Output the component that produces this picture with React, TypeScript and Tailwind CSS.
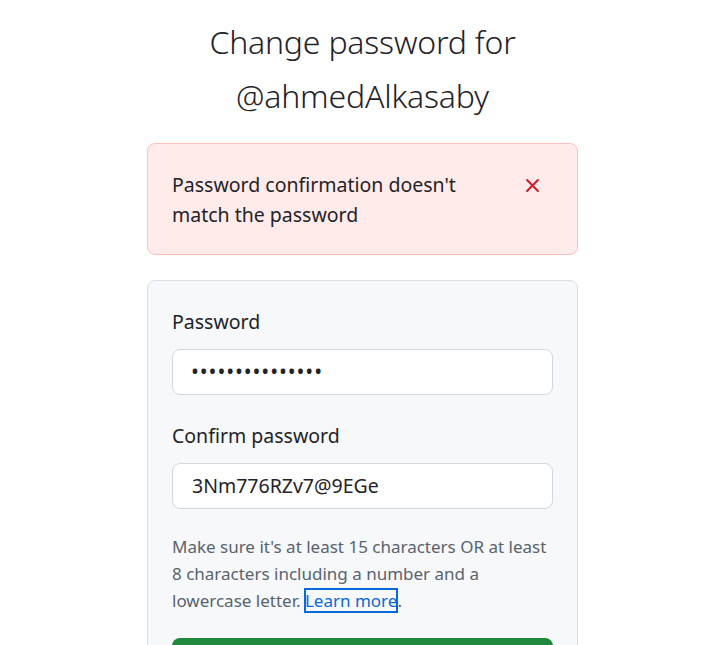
import React from "react";

export default function App() {
  return (
    <div className="min-h-[645px] bg-white pl-4 text-[#1f2328]" style={{ fontFamily: '"Noto Sans", "Open Sans", sans-serif' }}>
      <div className="mx-auto flex w-[431px] flex-col">
        <h1 className="mt-[15px] text-center text-[32px] font-light leading-[54px] tracking-[-0.2px]">
          Change password for
          <br />
          @ahmedAlkasaby
        </h1>
        <div className="mt-[20px] flex items-start justify-between rounded-[8px] border border-[#ffc1c0] bg-[#ffebe9] pb-[24px] pl-[24px] pr-[33px] pt-[26px]">
          <p className="w-[300px] text-[19.5px] leading-[30px]">Password confirmation doesn't match the password</p>
          <svg width="23" height="23" viewBox="0 0 16 16" className="mt-[4px] fill-[#cf222e]">
            <path d="M3.72 3.72a.75.75 0 0 1 1.06 0L8 6.94l3.22-3.22a.749.749 0 0 1 1.275.326.749.749 0 0 1-.215.734L9.06 8l3.22 3.22a.749.749 0 0 1-.326 1.275.749.749 0 0 1-.734-.215L8 9.06l-3.22 3.22a.751.751 0 0 1-1.042-.018.751.751 0 0 1-.018-1.042L6.94 8 3.72 4.78a.75.75 0 0 1 0-1.06Z" />
          </svg>
        </div>
        <div className="mt-[25px] h-[400px] rounded-t-[8px] border border-[#d8dee4] bg-[#f6f8fa] px-[24px] pt-[26px]">
          <label className="block text-[19.5px] leading-[30px]">Password</label>
          <div className="mt-[12px] flex h-[46px] items-center rounded-[8px] border border-[#d1d9e0] bg-white pl-[18px]">
            <span className="text-[21px] tracking-[0.9px]">•••••••••••••••</span>
          </div>
          <label className="mt-[26px] block text-[19.5px] leading-[30px]">Confirm password</label>
          <div className="mt-[12px] flex h-[46px] items-center rounded-[8px] border border-[#d1d9e0] bg-white pl-[19px] text-[19.5px]">
            3Nm776RZv7@9EGe
          </div>
          <p className="mt-[24px] text-[17px] leading-[27px] text-[#59636e]">
            Make sure it's at least 15 characters OR at least 8 characters including a number and a lowercase letter.{" "}
            <a className="text-[#0969da] outline outline-2 -outline-offset-1 outline-[#0969da]" href="#">Learn more</a>.
          </p>
          <button className="mt-[24px] h-[56px] w-full rounded-[8px] bg-[#1f883d] pt-[12px] text-[19px] font-semibold text-white">
            Update password
          </button>
        </div>
      </div>
    </div>
  );
}
